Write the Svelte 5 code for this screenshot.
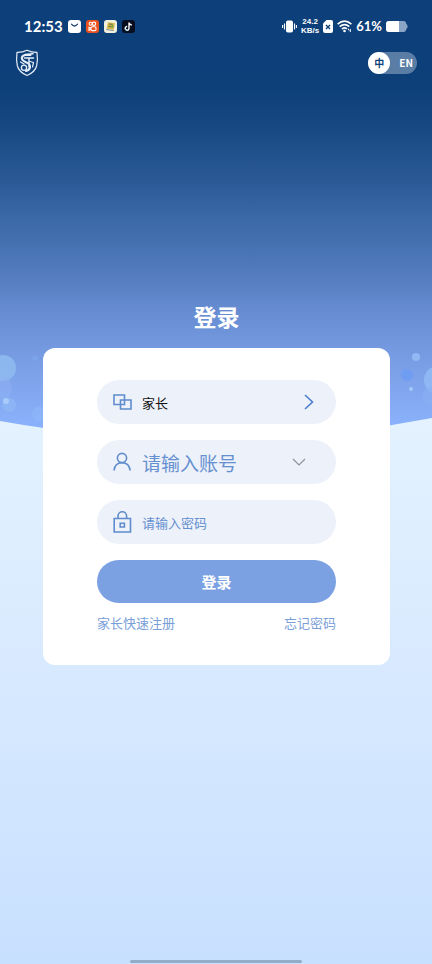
<script>
  let language = $state('zh');
  let account = $state('');
  let password = $state('');

  const submit = (event) => event.preventDefault();
</script>

<div class="page">
  <svg class="backdrop" viewBox="0 0 432 440" preserveAspectRatio="none" aria-hidden="true">
    <defs>
      <linearGradient id="sky" gradientUnits="userSpaceOnUse" x1="0" y1="0" x2="0" y2="440">
        <stop offset="0" stop-color="#0d3f7a" />
        <stop offset="0.2" stop-color="#0d3f79" />
        <stop offset="0.28" stop-color="#174780" />
        <stop offset="0.34" stop-color="#20508a" />
        <stop offset="0.41" stop-color="#2a5996" />
        <stop offset="0.49" stop-color="#3a67a5" />
        <stop offset="0.57" stop-color="#4873b4" />
        <stop offset="0.65" stop-color="#5980c3" />
        <stop offset="0.69" stop-color="#6389ce" />
        <stop offset="0.77" stop-color="#7196dc" />
        <stop offset="0.86" stop-color="#7ea3eb" />
        <stop offset="0.96" stop-color="#89b0fa" />
      </linearGradient>
    </defs>
    <path d="M0 0H432V418Q216 460 0 421Z" fill="url(#sky)" />
    <circle cx="3" cy="368" r="13" fill="#90bdf0" opacity="0.8" />
    <circle cx="-2" cy="388" r="14" fill="#93b3f5" opacity="0.4" />
    <circle cx="9" cy="405" r="7" fill="#8fb9f5" opacity="0.7" />
    <circle cx="6" cy="401" r="3" fill="#a8cbfb" />
    <circle cx="39" cy="414" r="7" fill="#8db9f8" opacity="0.6" />
    <circle cx="35" cy="358" r="3" fill="#7faaf0" opacity="0.5" />
    <circle cx="416" cy="357" r="4" fill="#92b9f4" />
    <circle cx="407" cy="375" r="6" fill="#6f9df2" />
    <circle cx="411" cy="389" r="2" fill="#a3c8fb" />
    <circle cx="438" cy="380" r="14" fill="#92bcf5" opacity="0.85" />
    <circle cx="432" cy="397" r="10" fill="#8ab0f4" opacity="0.5" />
  </svg>

  <div class="status">
    <div class="group">
      <span class="clock">12:53</span>
      <svg class="app" viewBox="0 0 13 13" aria-hidden="true">
        <rect width="13" height="13" rx="3" fill="#fff" />
        <path d="M3.5 4.2Q6.5 7.8 9.5 4.2" fill="none" stroke="#153c70" stroke-width="1.3" stroke-linecap="round" />
      </svg>
      <svg class="app" viewBox="0 0 13 13" aria-hidden="true">
        <rect width="13" height="13" rx="3" fill="#ec5220" />
        <g fill="none" stroke="#fff" stroke-width="1.1">
          <circle cx="4.7" cy="3.8" r="1.5" /><circle cx="8" cy="3.8" r="1.7" />
          <rect x="5" y="6.8" width="5" height="3.8" rx="1.2" /><path d="M5 8L3 7.2V10.2L5 9.4" />
        </g>
      </svg>
      <svg class="app" viewBox="0 0 13 13" aria-hidden="true">
        <rect width="13" height="13" rx="3" fill="#f3f1dd" />
        <path d="M4 2.2L11 3.3 9.7 9.8 2.6 8.8Z" fill="#d7b64b" />
        <path d="M5 4L8.5 4.4M4.4 6.2L7.8 6.8" stroke="#63733a" />
        <path d="M8 4L10 7 7.5 8Z" fill="#6eaa50" />
        <path d="M2.3 9.5L9.7 10.6" stroke="#7c8d91" />
      </svg>
      <svg class="app" viewBox="0 0 13 13" aria-hidden="true">
        <rect width="13" height="13" rx="3" fill="#080d20" />
        <path d="M7 2.5V8.3A1.9 1.9 0 1 1 5.2 6.4M7 2.7Q7.5 4.8 9.8 5" fill="none" stroke="#fff" stroke-width="1.4" />
        <path d="M3.2 9A2 2 0 0 0 5.2 10.7" fill="none" stroke="#42d7df" stroke-width=".6" />
      </svg>
    </div>

    <div class="group right">
      <svg width="15" height="13" viewBox="0 0 15 13" aria-hidden="true">
        <rect x="4" y="0.5" width="7" height="12" rx="1.8" fill="#fff" />
        <path d="M2.5 3.5V9.5M12.5 3.5V9.5M.6 5V8M14.4 5V8" stroke="#fff" stroke-width="1.1" />
      </svg>
      <span class="rate"><span>24.2</span><span>KB/s</span></span>
      <svg width="10" height="13" viewBox="0 0 10 13" aria-hidden="true">
        <path d="M3.5 0H8Q10 0 10 2V11Q10 13 8 13H2Q0 13 0 11V3.5Z" fill="#fff" />
        <path d="M3 5L7 9M7 5L3 9" stroke="#0d3f7a" stroke-width="1.4" />
      </svg>
      <svg width="15" height="13" viewBox="0 0 15 13" aria-hidden="true">
        <path d="M.6 4.2Q7.5 -1.9 14.4 4.2M2.7 6.7Q7.5 2.5 12.3 6.7M4.9 9.1Q7.5 6.9 9.8 8.8" fill="none" stroke="#fff" stroke-width="1.6" />
        <circle cx="7.5" cy="11" r="1.3" fill="#fff" />
        <path d="M11 8.5L12 10.5M13.3 12V9" stroke="#fff" />
      </svg>
      <span class="percent">61%</span>
      <svg width="22" height="11" viewBox="0 0 22 11" aria-hidden="true">
        <path d="M3 0H17.5Q20 0 20.3 3 21.6 3.6 21.6 5.5T20.3 8Q20 11 17.5 11H3Q0 11 0 8V3Q0 0 3 0Z" fill="#8ba5c7" />
        <path d="M3 0H13V11H3Q0 11 0 8V3Q0 0 3 0Z" fill="#fff" />
      </svg>
    </div>
  </div>

  <header>
    <svg width="24" height="28" viewBox="0 0 24 28" role="img" aria-label="校徽">
      <g fill="none" stroke="#e6eef8" stroke-linecap="round" stroke-linejoin="round">
        <path d="M12 1.2Q16.5 3.5 22 3.4Q23 11 21.6 17 20 23 12 26.5 4 23 2.4 17 1 11 2 3.4 7.5 3.5 12 1.2Z" stroke-width="1.2" />
        <path d="M15.5 6H10Q6.5 7 6.8 9.5 7.5 12 11 13.2 15.6 15 15 18.6 14 21.5 11 22" stroke-width="2" />
        <path d="M9.5 9H18.5M10 5.5L18 4.8M14 9V18" stroke-width="1.5" />
        <circle cx="9" cy="18.8" r="2.6" stroke-width="1.3" />
        <path d="M5.5 13L9 15M15 12.5L18.5 13.5 17.5 18" stroke-width="1.2" />
      </g>
    </svg>
    <div class="language" role="group" aria-label="语言">
      <button type="button" class:active={language === 'zh'} onclick={() => (language = 'zh')}>中</button>
      <button type="button" class:active={language === 'en'} onclick={() => (language = 'en')}>EN</button>
    </div>
  </header>

  <main>
    <h1>登录</h1>
    <form onsubmit={submit}>
      <button type="button" class="field">
        <svg width="20" height="24" viewBox="0 0 20 24" aria-hidden="true">
          <path d="M2 5H12.5V14.5H2ZM8.5 10H19V19H8.5Z" />
        </svg>
        <span class="value">家长</span>
        <svg class="next" width="10" height="16" viewBox="0 0 10 16" aria-hidden="true"><path d="M1 1L8.5 8 1 15" /></svg>
      </button>

      <div class="field account">
        <svg width="20" height="24" viewBox="0 0 20 24" aria-hidden="true">
          <circle cx="10" cy="8" r="4.6" /><path d="M2 20.5Q2.8 12.7 10 12.7T18.2 20.5" />
        </svg>
        <input type="text" aria-label="账号" placeholder="请输入账号" autocomplete="username" bind:value={account} />
        <button type="button" class="more" aria-label="选择账号">
          <svg width="14" height="8" viewBox="0 0 14 8" aria-hidden="true"><path d="M1 1L7 7 13 1" /></svg>
        </button>
      </div>

      <div class="field">
        <svg width="20" height="24" viewBox="0 0 20 24" aria-hidden="true">
          <path d="M2.2 8.5H18.5V22H2.2ZM6 8.5V6A4.3 4.3 0 0 1 14.6 6V8.5M8.2 13.2H12.4V17H8.2Z" />
        </svg>
        <input type="password" aria-label="密码" placeholder="请输入密码" autocomplete="current-password" bind:value={password} />
      </div>

      <button type="submit" class="submit">登录</button>

      <div class="links">
        <a href="#register">家长快速注册</a>
        <a href="#forgot">忘记密码</a>
      </div>
    </form>
  </main>

  <div class="handle"></div>
</div>

<style>
  :global(body) {
    margin: 0;
  }

  .page {
    position: relative;
    display: flex;
    flex-direction: column;
    min-height: 100vh;
    overflow: hidden;
    background: linear-gradient(#e4f2ff 420px, #d7e9ff 680px, #c8e0ff);
    font-family: 'Noto Sans CJK SC', sans-serif;
    color: #fff;
  }

  .backdrop {
    position: absolute;
    top: 0;
    left: 0;
    width: 100%;
    height: 440px;
  }

  svg {
    display: block;
    flex: none;
  }

  button,
  input {
    margin: 0;
    padding: 0;
    border: 0;
    background: none;
    font: inherit;
    color: inherit;
  }

  button {
    cursor: pointer;
  }

  .status,
  header,
  main,
  .handle {
    position: relative;
  }

  .status {
    display: flex;
    justify-content: space-between;
    align-items: center;
    height: 52px;
    padding: 0 24px;
    font-family: Lato, sans-serif;
    font-weight: 700;
  }

  .group {
    display: flex;
    align-items: center;
    gap: 5px;
  }

  .group.right {
    gap: 4px;
  }

  .clock {
    font-size: 15px;
    line-height: 20px;
  }

  .app {
    width: 13px;
    height: 13px;
  }

  .rate {
    display: flex;
    flex-direction: column;
    align-items: center;
    font-family: 'Liberation Sans', sans-serif;
    font-size: 8px;
    line-height: 9px;
  }

  .percent {
    font-size: 13px;
    line-height: 20px;
  }

  header {
    display: flex;
    justify-content: space-between;
    align-items: center;
    height: 22px;
    padding: 0 15px;
  }

  .language {
    display: flex;
    border-radius: 11px;
    background: #5a7da6;
  }

  .language button {
    min-width: 22px;
    height: 22px;
    padding: 0 4px;
    border-radius: 11px;
    font-size: 10px;
    font-weight: 700;
    line-height: 22px;
  }

  .language button:last-child {
    padding-left: 9px;
  }

  .language .active {
    background: #fff;
    color: #0d3f7a;
  }

  main {
    display: flex;
    flex-direction: column;
    padding: 226px 42px 0 43px;
  }

  h1 {
    margin: 0 0 16px;
    font-size: 23px;
    font-weight: 700;
    line-height: 32px;
    text-align: center;
  }

  form {
    display: flex;
    flex-direction: column;
    gap: 16px;
    padding: 32px 54px;
    border-radius: 12px;
    background: #fff;
  }

  .field {
    display: flex;
    align-items: center;
    gap: 10px;
    height: 44px;
    padding: 0 22px 0 15px;
    border-radius: 22px;
    background: #edf1fa;
    font-size: 13px;
    color: #5f8ccd;
  }

  .field svg {
    fill: none;
    stroke: #5f8ccd;
    stroke-width: 1.6;
  }

  .field .next {
    stroke: #4a7dcc;
  }

  .value {
    flex: 1;
    color: #111;
    text-align: left;
  }

  .field input {
    flex: 1;
    min-width: 0;
    height: 32px;
    outline: none;
  }

  .field input::placeholder {
    color: #6590d0;
    opacity: 1;
  }

  .account {
    padding-right: 30px;
    font-size: 19px;
  }

  .field .more svg {
    stroke: #8e9298;
    stroke-width: 1.2;
  }

  .submit {
    height: 43px;
    border-radius: 22px;
    background: #7ba1e3;
    font-size: 15px;
    font-weight: 700;
  }

  .links {
    display: flex;
    justify-content: space-between;
    margin-top: -6px;
    font-size: 13px;
    line-height: 20px;
  }

  a {
    color: #7a9fd8;
    text-decoration: none;
  }

  .handle {
    width: 40%;
    height: 3px;
    margin: auto auto 1px;
    border-radius: 2px;
    background: #93adc9;
  }
</style>
